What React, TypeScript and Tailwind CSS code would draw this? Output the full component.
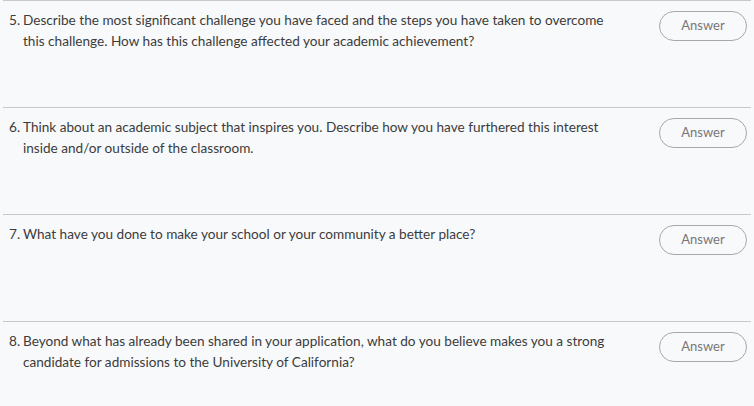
const questions = [
  {
    n: 5,
    text: "Describe the most significant challenge you have faced and the steps you have taken to overcome this challenge. How has this challenge affected your academic achievement?",
  },
  {
    n: 6,
    text: "Think about an academic subject that inspires you. Describe how you have furthered this interest inside and/or outside of the classroom.",
  },
  {
    n: 7,
    text: "What have you done to make your school or your community a better place?",
  },
  {
    n: 8,
    text: "Beyond what has already been shared in your application, what do you believe makes you a strong candidate for admissions to the University of California?",
  },
]

export default function App() {
  return (
    <main className="w-[754px] h-[406px] overflow-hidden bg-[#f8f9fa] px-[3px] font-['Lato',sans-serif]">
      {questions.map((q) => (
        <div key={q.n} className="h-[107px] border-t border-[#c8c8c8] flex justify-between pl-[6px] pr-[4px] pt-[9px]">
          <div className="flex text-[13.6px] leading-[21px] text-[#3c3c3c] w-[605px]">
            <span className="w-[14px] shrink-0">{q.n}.</span>
            <p>{q.text}</p>
          </div>
          <button className="mt-[1px] h-[30px] w-[88px] rounded-full border border-[#a8a8a8] text-[13px] text-[#777] bg-transparent">
            Answer
          </button>
        </div>
      ))}
    </main>
  )
}
